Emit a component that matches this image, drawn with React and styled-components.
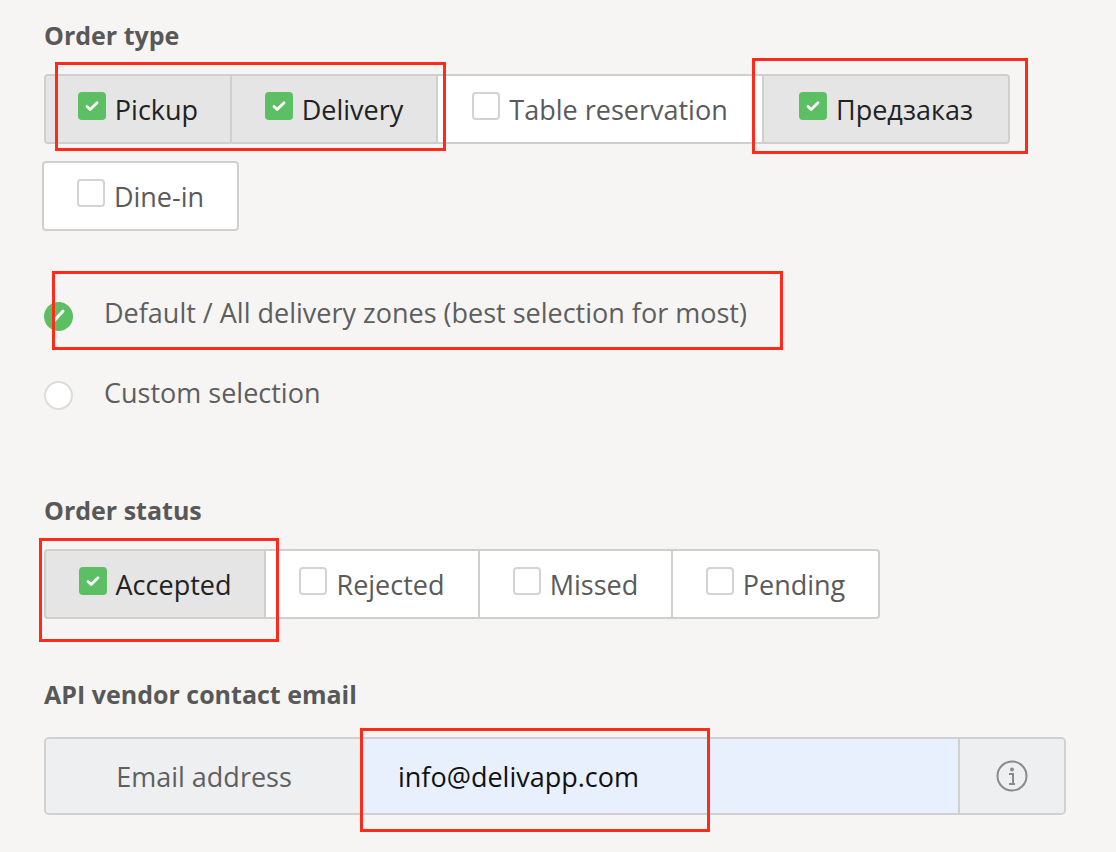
import React from 'react';
import styled, { createGlobalStyle } from 'styled-components';

const Global = createGlobalStyle`
  body {
    margin: 0;
    background: #f6f5f3;
    font-family: 'Open Sans', 'Noto Sans', sans-serif;
  }
`;

const Page = styled('div')`
  position: relative;
  width: 1116px;
  height: 852px;
  padding: 18px 50px 0 44px;
  box-sizing: border-box;
  overflow: hidden;
`;

const Heading = styled('h3')`
  margin: 0 0 ${(p) => p.$gap || 14}px;
  font-size: 25px;
  font-weight: 700;
  color: #585858;
  line-height: 34px;
`;

const Group = styled('div')`
  display: flex;
  flex-wrap: wrap;
  row-gap: 17px;
  margin-left: ${(p) => p.$offset || 0}px;
`;

const Toggle = styled('div')`
  display: flex;
  align-items: center;
  justify-content: center;
  gap: 9px;
  width: ${(p) => p.$w}px;
  height: 70px;
  box-sizing: border-box;
  border: 2px solid #cfcfcf;
  margin-left: -2px;
  background: ${(p) => (p.$on ? '#e5e5e5' : '#fff')};
  color: ${(p) => (p.$on ? '#222' : '#5a5a5a')};
  font-size: 27px;
  &:first-child {
    margin-left: 0;
    border-radius: 4px 0 0 4px;
  }
  &:last-child {
    border-radius: 0 4px 4px 0;
  }
  &.alone {
    border-radius: 4px;
    margin-left: -2px;
  }
`;

const Box = styled('span')`
  width: 28px;
  height: 28px;
  box-sizing: border-box;
  border-radius: 4px;
  margin-top: -6px;
  display: flex;
  align-items: center;
  justify-content: center;
  background: ${(p) => (p.$on ? '#5cbf64' : '#fff')};
  border: ${(p) => (p.$on ? 'none' : '2px solid #d3d3d3')};
`;

const Check = ({ on }) => (
  <Box $on={on}>
    {on && (
      <svg width="16" height="16" viewBox="0 0 16 16">
        <path d="M3 8.5l3.2 3L13 4.8" stroke="#fff" strokeWidth="2.8" fill="none" strokeLinecap="round" strokeLinejoin="round" />
      </svg>
    )}
  </Box>
);

const Radios = styled('div')`
  display: flex;
  flex-direction: column;
  gap: 50px;
  margin: 66px 0 86px;
`;

const RadioRow = styled('div')`
  display: flex;
  align-items: center;
  gap: 31px;
  font-size: 27px;
  color: #5e5e5e;
  height: 30px;
`;

const Circle = styled('span')`
  width: 29px;
  height: 29px;
  border-radius: 50%;
  box-sizing: border-box;
  background: ${(p) => (p.$on ? '#5cbf64' : '#fff')};
  border: ${(p) => (p.$on ? 'none' : '2px solid #dcdcdc')};
  margin-top: ${(p) => (p.$on ? 8 : 6)}px;
  display: flex;
  align-items: center;
  justify-content: center;
`;

const InputGroup = styled('div')`
  display: flex;
  height: 78px;
  border: 2px solid #d0d0d0;
  border-radius: 5px;
  overflow: hidden;
  box-sizing: border-box;
  font-size: 27px;
  margin-top: 26px;
`;

const Addon = styled('div')`
  width: ${(p) => p.$w}px;
  display: flex;
  align-items: center;
  justify-content: center;
  background: #eeeff1;
  color: #5f5f5f;
  border-left: ${(p) => (p.$right ? '2px solid #d0d0d0' : 'none')};
  box-sizing: border-box;
`;

const Input = styled('div')`
  flex: 1;
  display: flex;
  align-items: center;
  padding-left: 36px;
  background: #e8f0fd;
  color: #111;
`;

const Mark = styled('div')`
  position: absolute;
  border: 3.5px solid #ff2a1a;
  box-sizing: border-box;
`;

const marks = [
  [55, 62, 391, 89],
  [752, 58, 276, 96],
  [52, 271, 731, 79],
  [39, 538, 240, 104],
  [360, 728, 350, 104],
];

export default function App() {
  return (
    <Page>
      <Global />
      <Heading $gap={22}>Order type</Heading>
      <Group>
        <Toggle $on $w={188}><Check on />Pickup</Toggle>
        <Toggle $on $w={208}><Check on />Delivery</Toggle>
        <Toggle $w={328}><Check />Table reservation</Toggle>
        <Toggle $on $w={248}><Check on />Предзаказ</Toggle>
      </Group>
      <Group $offset={-2} style={{ marginTop: 17 }}>
        <Toggle className="alone" $w={197} style={{ marginLeft: 0 }}><Check />Dine-in</Toggle>
      </Group>
      <Radios>
        <RadioRow>
          <Circle $on>
            <svg width="16" height="16" viewBox="0 0 16 16">
              <path d="M3 13L12 3" stroke="#fff" strokeWidth="3" strokeLinecap="round" />
            </svg>
          </Circle>
          Default / All delivery zones (best selection for most)
        </RadioRow>
        <RadioRow>
          <Circle />
          Custom selection
        </RadioRow>
      </Radios>
      <Heading $gap={22}>Order status</Heading>
      <Group>
        <Toggle $on $w={222}><Check on />Accepted</Toggle>
        <Toggle $w={216}><Check />Rejected</Toggle>
        <Toggle $w={195}><Check />Missed</Toggle>
        <Toggle $w={209}><Check />Pending</Toggle>
      </Group>
      <Heading style={{ marginTop: 58, marginBottom: 0 }}>API vendor contact email</Heading>
      <InputGroup>
        <Addon $w={316}>Email address</Addon>
        <Input>info@delivapp.com</Input>
        <Addon $w={106} $right>
          <svg width="34" height="34" viewBox="0 0 34 34">
            <circle cx="17" cy="17" r="14.5" fill="none" stroke="#8a8a8a" strokeWidth="2" />
            <circle cx="17" cy="10.5" r="2" fill="#8a8a8a" />
            <path d="M14 15h4v10M14 25h6" stroke="#8a8a8a" strokeWidth="2" fill="none" />
          </svg>
        </Addon>
      </InputGroup>
      {marks.map(([x, y, w, h]) => (
        <Mark key={x + '-' + y} style={{ left: x, top: y, width: w, height: h }} />
      ))}
    </Page>
  );
}
